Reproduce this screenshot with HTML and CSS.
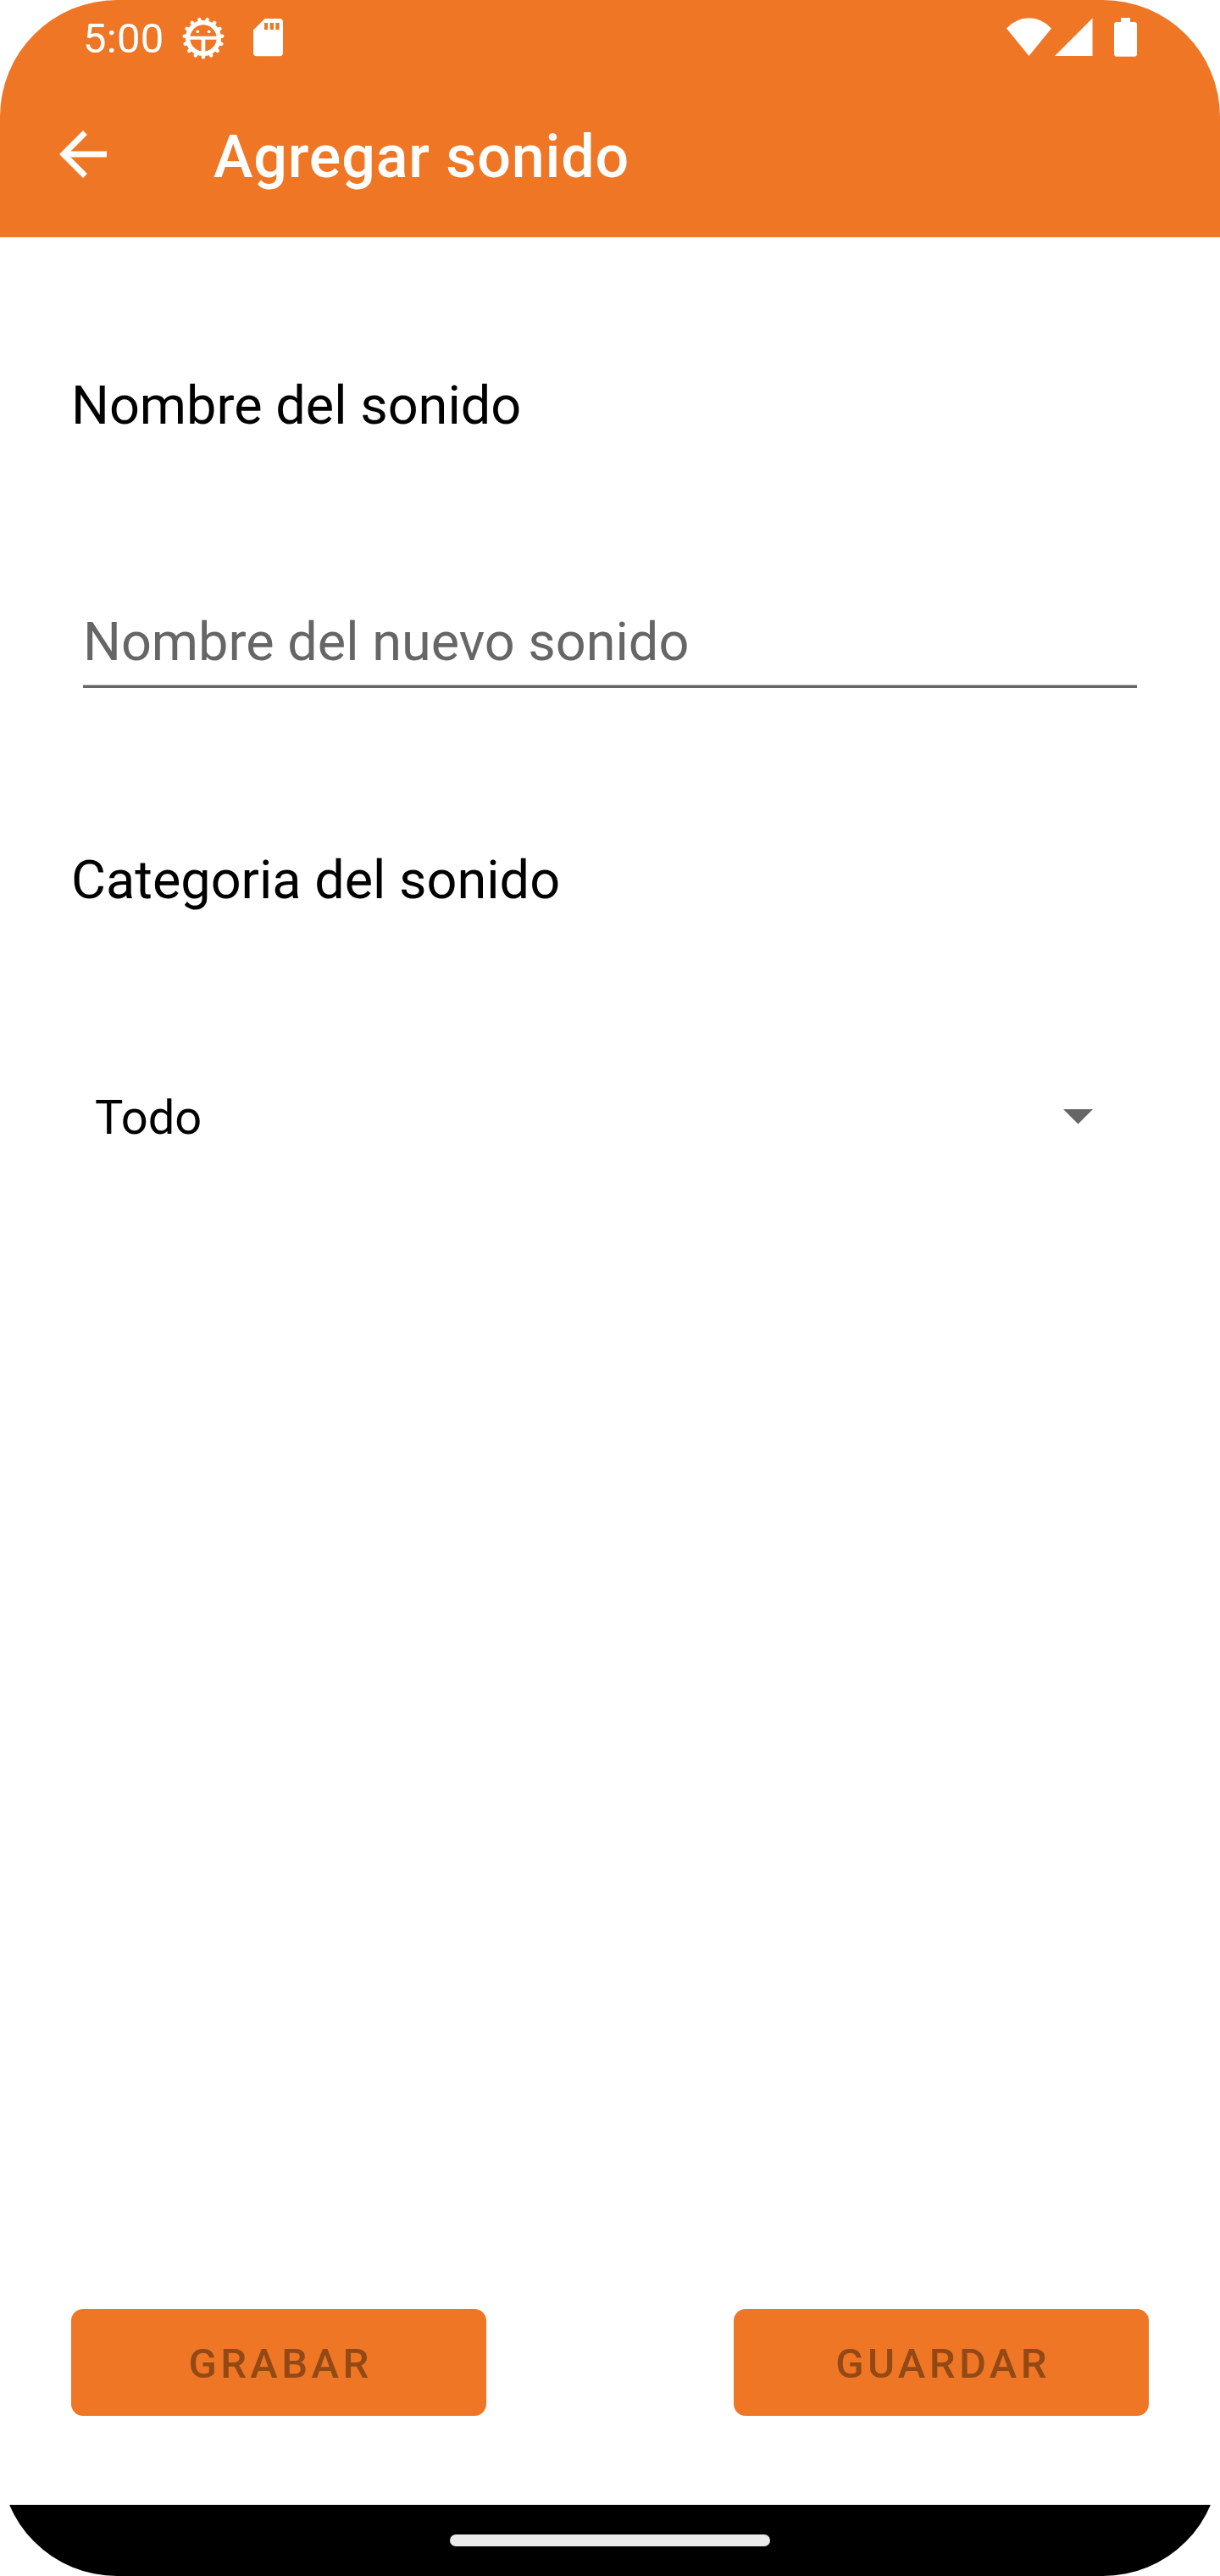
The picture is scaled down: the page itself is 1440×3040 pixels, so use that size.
FILE: index.html
```html
<!DOCTYPE html>
<html lang="es">
<head>
<meta charset="utf-8">
<title>Agregar sonido</title>
<link rel="stylesheet" href="styles.css">
</head>
<body>
<div class="screen">
  <header class="header">
    <div class="status-bar">
      <span class="clock">5:00</span>
      <svg class="icon-debug" width="50" height="50" viewBox="-25 -25 50 50" fill="none" stroke="#fff">
        <circle r="18.4" stroke-width="5.4"/>
        <path stroke-width="4.4" stroke-linecap="round" d="M3.74-17.6l.92-4.31M-3.74-17.6l-.92-4.31M10.58-14.56l2.59-3.56M-10.58-14.56l-2.59-3.56M15.59-9l3.81-2.2M-15.59-9l-3.81-2.2M17.9-1.88l4.38-.46M-17.9-1.88l-4.38-.46M17.12 5.56l4.18 1.36M-17.12 5.56l-4.18 1.36M13.38 12.04l3.27 2.95M-13.38 12.04l-3.27 2.95M7.32 16.44l1.79 4.02M-7.32 16.44l-1.79 4.02M0 18v4.4"/>
        <path stroke-width="4" d="M-17-.2H17"/>
        <path stroke-width="4.6" d="M0 0V17"/>
        <g fill="#fff" stroke="none"><circle cx="-6.7" cy="-7.7" r="1.9"/><circle cx="6.7" cy="-7.7" r="1.9"/></g>
      </svg>
      <svg class="icon-sd" width="35" height="45" viewBox="0 0 35 45">
        <path fill="#fff" fill-rule="evenodd" d="M13.5 0H31a4 4 0 0 1 4 4V40.300a4 4 0 0 1-4 4H4a4 4 0 0 1-4-4V13.500ZM13 5v8h4V5ZM19.700 5v8h4.300V5ZM26.300 5v8h4.400V5Z"/>
      </svg>
      <svg class="icon-wifi" width="53" height="46" viewBox="0 0 53 46">
        <path fill="#fff" d="M0 12.500Q11.500.3 26.500.3T53 12.500L26.500 45Z"/>
      </svg>
      <svg class="icon-signal" width="45" height="46" viewBox="0 0 45 46">
        <path fill="#fff" d="M0 45L44.500.5V45Z"/>
      </svg>
      <svg class="icon-battery" width="27" height="46" viewBox="0 0 27 46">
        <path fill="#fff" d="M8 0H19V5H24a3 3 0 0 1 3 3V42.700a3 3 0 0 1-3 3H3a3 3 0 0 1-3-3V8a3 3 0 0 1 3-3H8Z"/>
      </svg>
    </div>
    <div class="toolbar">
      <svg class="icon-back" width="84" height="84" viewBox="0 0 24 24">
        <path fill="#fff" d="M20 11H7.830l5.590-5.590L12 4l-8 8 8 8 1.410-1.410L7.830 13H20v-2z"/>
      </svg>
      <h1 class="title">Agregar sonido</h1>
    </div>
  </header>

  <main class="form">
    <label class="label" for="name">Nombre del sonido</label>
    <div class="field">
      <input class="input" id="name" type="text" placeholder="Nombre del nuevo sonido">
    </div>
    <div class="label">Categoria del sonido</div>
    <div class="spinner">
      <span>Todo</span>
      <svg class="caret" width="35" height="18" viewBox="0 0 35 18"><path fill="#666" d="M0 0H35L17.500 17.500Z"/></svg>
    </div>
    <div class="actions">
      <button class="button" disabled>GRABAR</button>
      <button class="button" disabled>GUARDAR</button>
    </div>
  </main>

  <footer class="nav-bar"><div class="handle"></div></footer>
</div>
</body>
</html>
```
FILE: styles.css
```css
* {
  box-sizing: border-box;
}

body {
  margin: 0;
  background: #fff;
  font-family: Roboto, "Liberation Sans", sans-serif;
}

svg {
  display: block;
  flex: none;
}

.screen {
  display: flex;
  flex-direction: column;
  width: 1440px;
  height: 3040px;
  overflow: hidden;
  border-radius: 138px;
  background: #fff;
}

.header {
  height: 280px;
  background: #ef7625;
  color: #fff;
}

.status-bar {
  display: flex;
  align-items: flex-start;
  height: 84px;
  padding: 0 98px;
}

.clock {
  width: 116px;
  margin-top: 18px;
  font-size: 49px;
  line-height: 56px;
  letter-spacing: 0.3px;
}

.icon-debug {
  margin: 19.5px 0 0 0.5px;
}

.icon-sd {
  margin: 22px 0 0 34.5px;
}

.icon-wifi {
  margin: 21px 0 0 auto;
}

.icon-signal {
  margin: 21px 0 0 4px;
}

.icon-battery {
  margin: 21px 0 0 25px;
}

.toolbar {
  display: flex;
  align-items: center;
  height: 196px;
  padding-left: 56px;
}

.title {
  margin: 6px 0 0 112px;
  font-size: 70px;
  font-weight: 500;
  line-height: 84px;
  letter-spacing: 0.0125em;
}

.form {
  display: flex;
  flex: 1;
  flex-direction: column;
  padding: 157px 84px 105px;
}

.label {
  color: #000;
  font-size: 63px;
  line-height: 84px;
}

.field {
  height: 155px;
  margin: 136px 14px 185px;
  padding-top: 59px;
  background: linear-gradient(#a5a5a5 1px, #666 1px) bottom / 100% 4px no-repeat;
}

.input {
  display: block;
  width: 100%;
  height: 84px;
  padding: 0;
  border: 0;
  outline: 0;
  background: none;
  color: #000;
  font: 400 63px/84px Roboto, "Liberation Sans", sans-serif;
}

.input::placeholder {
  color: #666;
  opacity: 1;
}

.spinner {
  display: flex;
  align-items: center;
  justify-content: space-between;
  height: 84px;
  margin-top: 196px;
  padding: 0 67px 0 28px;
  color: #000;
  font-size: 56px;
  line-height: 84px;
}

.caret {
  margin: 0 -1px 2px 0;
}

.actions {
  display: flex;
  justify-content: space-between;
  margin-top: auto;
}

.button {
  width: 490px;
  height: 126px;
  padding: 4px 0 0 4px;
  border: 0;
  border-radius: 14px;
  background: #ef7625;
  color: #934916;
  font: 500 49px/84px Roboto, "Liberation Sans", sans-serif;
  letter-spacing: 0.0892857em;
}

.nav-bar {
  display: flex;
  justify-content: center;
  height: 84px;
  padding-top: 35px;
  background: #000;
}

.handle {
  width: 378px;
  height: 14px;
  border-radius: 7px;
  background: #ebebeb;
}
```
